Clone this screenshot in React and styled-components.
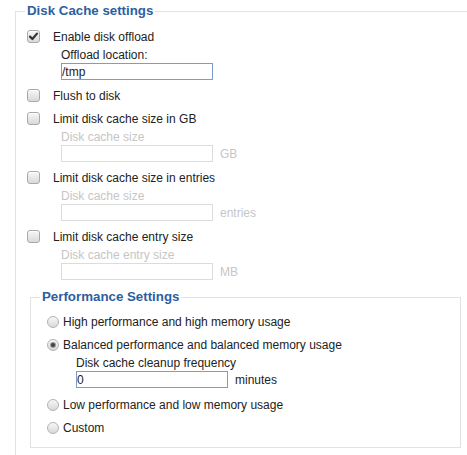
import React from "react";
import styled, { createGlobalStyle } from "styled-components";

const GlobalStyle = createGlobalStyle`
    html, body {
        margin: 0;
        padding: 0;
        background: #fff;
        overflow: hidden;
    }
    body {
        font-family: "Liberation Sans", Arial, sans-serif;
        font-size: 12px;
        color: #222;
    }
`;

const App = () => {
    return (
        <>
            <GlobalStyle />
            <OuterSet>
                <Legend>Disk Cache settings</Legend>

                <CheckRow>
                    <CheckBox checked />
                    <span>Enable disk offload</span>
                </CheckRow>
                <SubBlock>
                    <SubLabel>Offload location:</SubLabel>
                    <InputLine>
                        <TextBox defaultValue="/tmp" />
                    </InputLine>
                </SubBlock>

                <CheckRow>
                    <CheckBox />
                    <span>Flush to disk</span>
                </CheckRow>

                <CheckRow>
                    <CheckBox />
                    <span>Limit disk cache size in GB</span>
                </CheckRow>
                <SubBlock>
                    <SubLabel $disabled>Disk cache size</SubLabel>
                    <InputLine>
                        <TextBox disabled $disabled />
                        <Unit $disabled>GB</Unit>
                    </InputLine>
                </SubBlock>

                <CheckRow>
                    <CheckBox />
                    <span>Limit disk cache size in entries</span>
                </CheckRow>
                <SubBlock>
                    <SubLabel $disabled>Disk cache size</SubLabel>
                    <InputLine>
                        <TextBox disabled $disabled />
                        <Unit $disabled>entries</Unit>
                    </InputLine>
                </SubBlock>

                <CheckRow>
                    <CheckBox />
                    <span>Limit disk cache entry size</span>
                </CheckRow>
                <SubBlock>
                    <SubLabel $disabled>Disk cache entry size</SubLabel>
                    <InputLine>
                        <TextBox disabled $disabled />
                        <Unit $disabled>MB</Unit>
                    </InputLine>
                </SubBlock>

                <PerfSet>
                    <Legend>Performance Settings</Legend>
                    <RadioRow>
                        <Radio />
                        <span>High performance and high memory usage</span>
                    </RadioRow>
                    <RadioRow>
                        <Radio checked />
                        <span>Balanced performance and balanced memory usage</span>
                    </RadioRow>
                    <RadioSub>
                        <SubLabel>Disk cache cleanup frequency</SubLabel>
                        <InputLine>
                            <TextBox defaultValue="0" />
                            <Unit>minutes</Unit>
                        </InputLine>
                    </RadioSub>
                    <RadioRow>
                        <Radio />
                        <span>Low performance and low memory usage</span>
                    </RadioRow>
                    <RadioRow>
                        <Radio />
                        <span>Custom</span>
                    </RadioRow>
                </PerfSet>
            </OuterSet>
        </>
    );
}

const CheckBox = ({ checked }) => (
    <CheckBoxBox>
        {checked && (
            <svg width="11" height="11" viewBox="0 0 11 11">
                <path d="M2 5.6 L4.4 8 L9 2.6" fill="none" stroke="#333" strokeWidth="2.2" strokeLinecap="round" strokeLinejoin="round" />
            </svg>
        )}
    </CheckBoxBox>
);

const Radio = ({ checked }) => (
    <RadioBox>{checked && <RadioDot />}</RadioBox>
);

const OuterSet = styled.fieldset `
    margin: 3px 0 0 15px;
    width: 433px;
    min-width: 0;
    padding: 6px 9px 12px;
    border: 1px solid #e2e2e2;
    border-right: none;
`;

const Legend = styled.legend `
    padding: 0 2px;
    font-size: 13.3px;
    font-weight: bold;
    line-height: 16px;
    color: #2e5e9f;
`;

const CheckRow = styled.label `
    display: flex;
    align-items: center;
    height: 23px;
    gap: 13px;
    padding-left: 2px;
`;

const CheckBoxBox = styled.span `
    box-sizing: border-box;
    width: 13px;
    height: 13px;
    border: 1px solid #a9a9a9;
    border-radius: 3px;
    background: linear-gradient(#f7f7f7, #d9d9d9);
    box-shadow: inset 0 1px 0 #fff;
    display: flex;
    align-items: center;
    justify-content: center;
    flex-shrink: 0;
`;

const SubBlock = styled.div `
    padding-left: 36px;
    margin-bottom: 4px;
`;

const SubLabel = styled.div `
    line-height: 15px;
    color: ${props => props.$disabled ? "#c6c6c6" : "#222"};
`;

const InputLine = styled.div `
    display: flex;
    align-items: center;
    gap: 7px;
`;

const TextBox = styled.input `
    box-sizing: border-box;
    width: 152px;
    height: 17px;
    margin: 0;
    padding: 0;
    border: 1px solid ${props => props.$disabled ? "#dcdcdc" : "#7e9dc6"};
    background: #fff;
    font-family: "Liberation Sans", Arial, sans-serif;
    font-size: 12px;
    color: #222;
    outline: none;
`;

const Unit = styled.span `
    color: ${props => props.$disabled ? "#c6c6c6" : "#222"};
`;

const PerfSet = styled.fieldset `
    box-sizing: border-box;
    margin: 9px 0 0 5px;
    width: 431px;
    min-width: 0;
    padding: 6px 9px 7px;
    border: 1px solid #e2e2e2;
`;

const RadioRow = styled.label `
    display: flex;
    align-items: center;
    height: 22px;
    margin-bottom: 1px;
    gap: 4px;
    padding-left: 7px;
`;

const RadioBox = styled.span `
    box-sizing: border-box;
    width: 12px;
    height: 12px;
    border: 1px solid #b3b3b3;
    border-radius: 50%;
    background: linear-gradient(#f7f7f7, #d9d9d9);
    display: flex;
    align-items: center;
    justify-content: center;
    flex-shrink: 0;
`;

const RadioDot = styled.span `
    width: 4px;
    height: 4px;
    border-radius: 50%;
    background: #444;
    box-shadow: 0 0 0 1px #9a9a9a;
`;

const RadioSub = styled.div `
    padding-left: 36px;
    margin-top: -1px;
    margin-bottom: 6px;

    ${SubLabel} {
        line-height: 14px;
        margin-bottom: 1px;
    }
`;

export default App;
